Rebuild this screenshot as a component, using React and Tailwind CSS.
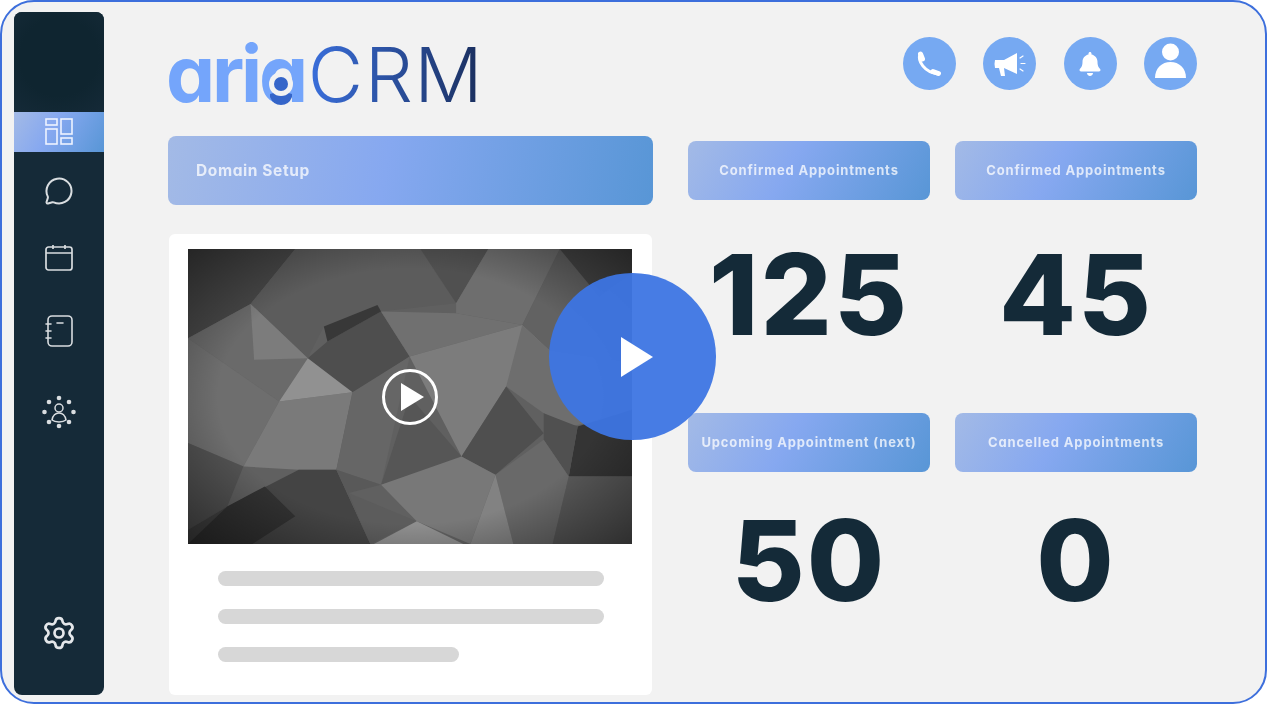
import { FaBell } from 'react-icons/fa';
import { MessageCircle, Settings } from 'lucide-react';

const polys = [
  ['50,57 350,57 225,222 50,325', '#474747'],
  ['350,57 700,57 800,220 590,245 430,290 385,385 225,222', '#5c5c5c'],
  ['700,57 890,57 800,220', '#505050'],
  ['890,57 1090,57 985,285 800,250 800,220', '#6e6e6e'],
  ['1090,57 1292,57 1292,400 1060,360 985,285', '#626262'],
  ['1090,57 1292,57 1292,130 1200,200', '#464646'],
  ['50,325 225,222 385,385 305,515', '#6a6a6a'],
  ['225,222 385,385 235,390', '#7c7c7c'],
  ['385,385 440,335 590,245 670,380 530,480 510,487', '#4e4e4e'],
  ['430,290 580,225 590,245 440,335', '#383838'],
  ['590,245 800,250 985,285 670,380', '#707070'],
  ['50,325 305,515 205,710 50,640', '#6e6e6e'],
  ['305,515 510,487 465,720 360,720 205,710', '#7a7a7a'],
  ['305,515 385,385 510,487', '#919191'],
  ['510,487 670,380 590,765 465,720', '#666666'],
  ['670,380 985,285 1060,360 940,470 815,680', '#7c7c7c'],
  ['985,285 1060,360 1292,400 1292,560 1110,590 1045,550 940,470', '#6e6e6e'],
  ['940,470 1045,610 910,735 815,680', '#4f4f4f'],
  ['590,765 670,500 815,680 770,705', '#565656'],
  ['1140,590 1292,540 1292,740 1115,740', '#343434'],
  ['1045,550 1140,590 1115,740 1045,630', '#505050'],
  ['910,735 1045,630 1115,740 1070,943 960,943', '#696969'],
  ['1115,740 1292,740 1292,943 1070,943', '#585858'],
  ['50,640 205,710 160,830 50,900', '#535353'],
  ['50,900 160,830 360,720 465,720 560,943 50,943', '#444444'],
  ['160,830 265,770 350,860 230,943 50,943', '#323232'],
  ['465,720 590,765 500,790 560,943', '#595959'],
  ['590,765 815,680 910,735 840,943 690,875', '#787878'],
  ['500,790 690,875 560,943', '#5c5c5c'],
  ['570,943 690,875 820,943', '#8e8e8e'],
  ['910,735 960,943 840,943', '#828282'],
];

function PolyVideo() {
  return (
    <div className="relative h-[295px] w-[444px] flex items-center justify-center overflow-hidden">
      <svg viewBox="50 57 1242 886" preserveAspectRatio="none" className="absolute inset-0 h-full w-full blur-[0.7px]">
        <defs>
          <radialGradient id="vignette" cx="50%" cy="50%" r="72%">
            <stop offset="60%" stopColor="#000" stopOpacity="0" />
            <stop offset="100%" stopColor="#000" stopOpacity="0.5" />
          </radialGradient>
        </defs>
        <rect x="50" y="57" width="1242" height="886" fill="#606060" />
        {polys.map(([points, fill]) => (
          <polygon key={points} points={points} fill={fill} />
        ))}
        <rect x="50" y="57" width="1242" height="886" fill="url(#vignette)" />
      </svg>
      <svg viewBox="0 0 58 58" className="relative h-[58px] w-[58px]">
        <circle cx="29" cy="29" r="26.5" fill="none" stroke="#fff" strokeWidth="3" />
        <polygon points="20,15 20,43 43,29" fill="#fff" />
      </svg>
    </div>
  );
}

function Label({ children }) {
  return (
    <div className="h-[59px] rounded-lg bg-[linear-gradient(120deg,#a3bae6_0%,#86a8f0_42%,#5896d6_100%)] flex items-center justify-center font-['Inter',sans-serif] font-bold text-[13px] tracking-[0.85px] [font-feature-settings:'cv11'] text-white/75 blur-[0.5px] whitespace-nowrap">
      {children}
    </div>
  );
}

function Stat({ value, height }) {
  return (
    <div className={`flex justify-center font-['Inter',sans-serif] font-extrabold text-[112px] tracking-[2px] leading-none text-[#142a38] blur-[0.3px] ${height}`}>
      {value}
    </div>
  );
}

function Logo() {
  return (
    <div className="relative -ml-[2px] flex items-baseline h-[66px] font-['Inter',sans-serif] leading-none">
      <span className="font-bold text-[78px] tracking-[-3.25px] [font-feature-settings:'cv11'] text-[#74a5fb]">aria</span>
      <span className="ml-[3px] font-light text-[76px] tracking-[1.5px] bg-[linear-gradient(90deg,#3a6fdc,#1a2e5c)] bg-clip-text text-transparent">
        CRM
      </span>
      <svg viewBox="0 0 40 48" className="absolute left-[97px] top-[29px] h-[48px] w-[40px]">
        <path d="M7 30 Q18 26 29 30 L29 33 Q26 41 18 41 Q10 41 7 33 Z" fill="#3565c9" />
        <circle cx="18" cy="20" r="12" fill="#f2f2f2" />
        <circle cx="18" cy="20" r="7" fill="#3565c9" />
      </svg>
    </div>
  );
}

function HeaderIcon({ children }) {
  return (
    <div className="h-[53px] w-[53px] rounded-full bg-[#76a9f2] flex items-center justify-center overflow-hidden text-white blur-[0.3px]">
      {children}
    </div>
  );
}

function PhoneGlyph() {
  return (
    <svg viewBox="0 0 26 26" className="h-[26px] w-[26px]" fill="none" stroke="#fff" strokeLinecap="round">
      <path d="M4 3 C1.500 10 8 21 22 23" strokeWidth="3" />
      <path d="M4.500 3 L6.500 8" strokeWidth="5" />
      <path d="M17 20.500 L22.500 22.500" strokeWidth="5" />
    </svg>
  );
}

function MegaphoneGlyph() {
  return (
    <svg viewBox="0 0 34 24" className="h-[24px] w-[34px]">
      <path d="M2 8 H11 L24 1 V22 L11 16 H2 Q1 12 2 8 Z" fill="#fff" />
      <path d="M6 16 H11 L12 24 H8 Z" fill="#fff" />
      <path d="M27 6 L30 4 M28 11.500 H32 M27 17 L30 19" stroke="#fff" strokeWidth="1.2" strokeLinecap="round" />
    </svg>
  );
}

function NavDashboard() {
  return (
    <svg viewBox="0 0 28 28" className="h-[28px] w-[28px]" fill="none" stroke="#eef3ff" strokeWidth="1.6">
      <rect x="1" y="1" width="11" height="6" />
      <rect x="1" y="11" width="11" height="15" />
      <rect x="16" y="1" width="11" height="15" />
      <rect x="16" y="20" width="11" height="6" />
    </svg>
  );
}

function NavCalendar() {
  return (
    <svg viewBox="0 0 28 28" className="h-[28px] w-[28px]" fill="none" stroke="#d9dde0" strokeWidth="1.7">
      <rect x="1" y="3" width="26" height="23" rx="2.5" />
      <path d="M1 9h26M8 1v4M20 1v4" />
    </svg>
  );
}

function NavNotebook() {
  return (
    <svg viewBox="0 0 28 32" className="h-[32px] w-[28px]" fill="none" stroke="#d9dde0" strokeWidth="1.6" strokeLinecap="round">
      <rect x="3" y="1" width="24" height="30" rx="4" />
      <path d="M1 9h5M1 16h5M1 23h5M12 8h6" />
    </svg>
  );
}

function NavPeople() {
  return (
    <svg viewBox="0 0 34 34" className="h-[34px] w-[34px]" fill="none" stroke="#d9dde0" strokeWidth="1.5">
      <circle cx="17" cy="13" r="4" />
      <path d="M10 25c1-5 4-7 7-7s6 2 7 7c-3 2.500-11 2.500-14 0z" />
      <g fill="#d9dde0" stroke="none">
        <circle cx="17" cy="3" r="2.300" />
        <circle cx="17" cy="31" r="2.300" />
        <circle cx="2.500" cy="17" r="2.300" />
        <circle cx="31.500" cy="17" r="2.300" />
        <circle cx="7" cy="7" r="2.300" />
        <circle cx="27" cy="7" r="2.300" />
        <circle cx="7" cy="27" r="2.300" />
        <circle cx="27" cy="27" r="2.300" />
      </g>
    </svg>
  );
}

function Sidebar() {
  return (
    <aside className="w-[90px] shrink-0 rounded-lg overflow-hidden bg-[#152a38] flex flex-col items-center blur-[0.4px]">
      <div className="h-[100px] w-full shrink-0 bg-[radial-gradient(circle_at_50%_45%,#0f2530_55%,#152a38_100%)]" />
      <div className="h-[40px] w-full shrink-0 flex items-center justify-center bg-[linear-gradient(120deg,#a3bae6_0%,#86a8f0_42%,#5896d6_100%)]">
        <NavDashboard />
      </div>
      <div className="mt-[25px] h-[28px] flex items-center">
        <MessageCircle size={30} strokeWidth={1.6} className="text-[#d9dde0]" />
      </div>
      <div className="mt-[39px] flex"><NavCalendar /></div>
      <div className="mt-[43px] flex"><NavNotebook /></div>
      <div className="mt-[48px] flex"><NavPeople /></div>
      <div className="mt-auto mb-[44px] flex">
        <Settings size={36} strokeWidth={1.8} className="text-[#e4e7ea]" />
      </div>
    </aside>
  );
}

export default function App() {
  return (
    <div className="h-[706px] w-[1267px] bg-white overflow-hidden">
      <div className="relative h-[704px] w-[1267px] rounded-[34px] border-2 border-[#3d6fdc] bg-[#f2f2f2] flex pl-[12px] pt-[10px] pb-[7px] pr-[68px]">
        <Sidebar />

        <main className="flex-1 pl-[64px] flex flex-col">
          <header className="h-[124px] shrink-0 flex justify-between pt-[25px]">
            <div className="-mt-[2px]"><Logo /></div>
            <div className="flex gap-[27.500px] h-[53px]">
              <HeaderIcon><PhoneGlyph /></HeaderIcon>
              <HeaderIcon><MegaphoneGlyph /></HeaderIcon>
              <HeaderIcon><FaBell size={24} /></HeaderIcon>
              <HeaderIcon>
                <svg viewBox="0 0 53 53" className="h-[53px] w-[53px]" fill="#fff">
                  <circle cx="26.500" cy="15" r="8.500" />
                  <path d="M11 41c0-10 7-16 15.500-16S42 31 42 41z" />
                </svg>
              </HeaderIcon>
            </div>
          </header>

          <div className="flex-1 flex gap-[35px] min-h-0">
            <section className="w-[485px] shrink-0 flex flex-col">
              <div className="h-[69px] shrink-0 rounded-lg pl-[28px] flex items-center bg-[linear-gradient(100deg,#a3bae6_0%,#86a8f0_45%,#5896d6_100%)] font-['Inter',sans-serif] font-bold text-[15.500px] tracking-[0.6px] [font-feature-settings:'cv11'] text-white/75 blur-[0.5px]">
                Domain Setup
              </div>
              <div className="mt-[29px] mx-px flex-1 rounded-md bg-white pt-[15px] pl-[19px]">
                <PolyVideo />
                <div className="mt-[27px] ml-[30px] flex flex-col gap-[23px]">
                  <div className="h-[15px] w-[386px] rounded-full bg-[#d7d7d7]" />
                  <div className="h-[15px] w-[386px] rounded-full bg-[#d7d7d7]" />
                  <div className="h-[15px] w-[241px] rounded-full bg-[#d7d7d7]" />
                </div>
              </div>
            </section>

            <section className="flex-1 pt-[5px] grid grid-cols-2 gap-x-[25px] content-start">
              <Label>Confirmed Appointments</Label>
              <Label>Confirmed Appointments</Label>
              <Stat value="125" height="h-[213px] pt-[38px]" />
              <Stat value="45" height="h-[213px] pt-[38px]" />
              <Label>Upcoming Appointment (next)</Label>
              <Label>Cancelled Appointments</Label>
              <Stat value="50" height="h-[150px] pt-[32px]" />
              <Stat value="0" height="h-[150px] pt-[32px]" />
            </section>
          </div>
        </main>

        <div className="absolute left-[547px] top-[271px] h-[167px] w-[167px] rounded-full bg-[#3d75e3]/95 flex items-center justify-center">
          <svg viewBox="0 0 32 40" className="ml-[9px] h-[40px] w-[32px]">
            <polygon points="0,0 32,20 0,40" fill="#fff" />
          </svg>
        </div>
      </div>
    </div>
  );
}
